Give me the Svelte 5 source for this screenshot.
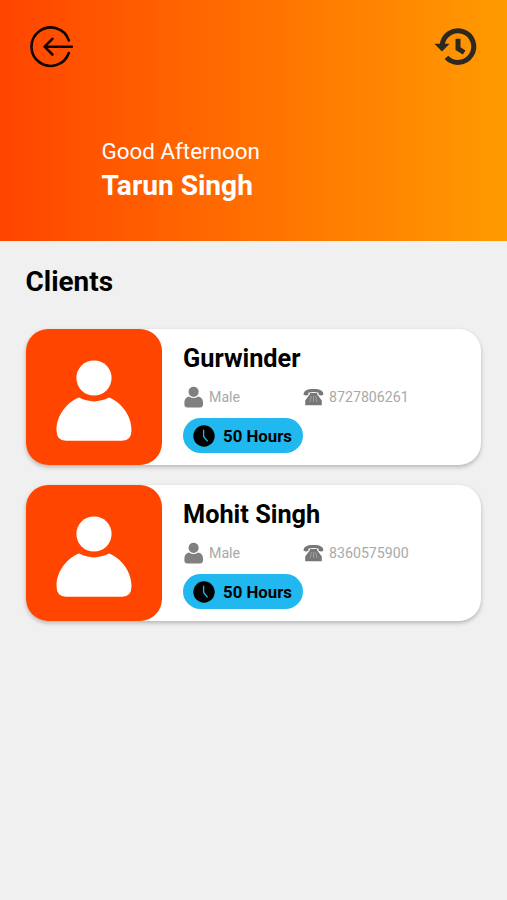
<script lang="ts">
	const user = { greeting: 'Good Afternoon', name: 'Tarun Singh' };

	const clients = [
		{ name: 'Gurwinder', gender: 'Male', phone: '8727806261', hours: 50 },
		{ name: 'Mohit Singh', gender: 'Male', phone: '8360575900', hours: 50 }
	];
</script>

<main>
	<header>
		<nav>
			<button aria-label="Back">
				<svg width="46" height="46" viewBox="0 0 46 46" fill="none" stroke="#100500" stroke-width="2.6" stroke-linecap="round" stroke-linejoin="round">
					<path d="M40.8 17.4 A19.2 19.2 0 1 0 40.8 30" />
					<path d="M43.8 23.7 H16.6 M24.4 15.9 L16.6 23.7 L24.4 31.5" />
				</svg>
			</button>
			<button aria-label="History">
				<svg width="46" height="46" viewBox="0 0 46 46">
					<path d="M9.2 22.4 A15.8 15.8 0 1 1 13.4 34.4" fill="none" stroke="#2b2920" stroke-width="5" />
					<path d="M1.4 20.8 H16.6 L9 28.6 Z" fill="#2b2920" />
					<path d="M25 15.8 V25.6 L31.2 29.5" fill="none" stroke="#2b2920" stroke-width="5" />
				</svg>
			</button>
		</nav>
		<div class="greeting">
			<p>{user.greeting}</p>
			<h1>{user.name}</h1>
		</div>
	</header>

	<section>
		<h2>Clients</h2>
		{#each clients as client}
			<article>
				<div class="avatar">
					<svg width="76" height="82" viewBox="0 0 76 82" fill="#fff">
						<circle cx="38" cy="18" r="17.6" />
						<path d="M23 37.6 Q38 45.2 53 37.6 C66 43 75.5 56 75.5 70 Q75.5 80.8 66 80.8 H10 Q.5 80.8 .5 70 C.5 56 10 43 23 37.6 Z" />
					</svg>
				</div>
				<div class="info">
					<h3>{client.name}</h3>
					<div class="details">
						<span class="gender">
							<svg width="20" height="22" viewBox="0 0 20 22" fill="#808080">
								<circle cx="10.6" cy="5.8" r="5.1" />
								<path d="M6 10.6 Q10.6 13.6 15.2 10.6 Q20 11.6 20 16.6 V18.6 Q20 21.4 17.2 21.4 H4.2 Q1.4 21.4 1.4 18.6 V16.6 Q1.4 11.6 6 10.6 Z" />
							</svg>
							{client.gender}
						</span>
						<span class="phone">
							<svg width="21" height="18" viewBox="0 0 21 18">
								<path d="M.6 6.8 C.4 3 3.6 1 10.5 1 S20.6 3 20.4 6.8 Q18 8 15.6 6.8 V4.8 Q10.5 3.4 5.4 4.8 V6.8 Q3 8 .6 6.8 Z" fill="#777" />
								<path d="M7 6 V5 H14 V6 L18.8 12.6 V17.2 H2.2 V12.6 Z" fill="#777" />
								<path d="M8.4 8 L7 14 M10.5 8 V14 M12.6 8 L14 14" fill="none" stroke="#aaa" stroke-width=".8" />
							</svg>
							{client.phone}
						</span>
					</div>
					<div class="hours">
						<svg width="22" height="22" viewBox="0 0 22 22">
							<circle cx="11" cy="11" r="10.7" />
							<path d="M10.6 4.8 V11.4 L14.6 16.4" fill="none" stroke="#21b8ef" stroke-width="1.3" />
						</svg>
						{client.hours} Hours
					</div>
				</div>
			</article>
		{/each}
	</section>
</main>

<style>
	:global(body) {
		margin: 0;
		background: #f0f0f0;
	}

	main {
		min-height: 900px;
		background: #f0f0f0;
		font-family: Roboto, sans-serif;
		color: #000;
	}

	h1, h2, h3, p {
		margin: 0;
	}

	svg {
		display: block;
		flex: none;
	}

	header {
		box-sizing: border-box;
		height: 241px;
		padding: 23px 28px 0;
		background: linear-gradient(90deg, #ff4500, #ff9b00);
		color: #fff;
	}

	nav {
		display: flex;
		justify-content: space-between;
	}

	button {
		padding: 0;
		border: 0;
		background: none;
	}

	.greeting {
		padding: 66px 0 0 73.5px;
	}

	.greeting p {
		font-size: 22.4px;
		line-height: 33px;
	}

	.greeting h1 {
		font-size: 28.1px;
		line-height: 36px;
	}

	section {
		padding: 24px 26px 0 25.5px;
	}

	h2 {
		margin-bottom: 30px;
		font-size: 27.9px;
		line-height: 34px;
	}

	article {
		display: flex;
		height: 136px;
		margin-bottom: 20px;
		border-radius: 22px;
		background: #fff;
		box-shadow: 0 2px 4px rgba(0, 0, 0, 0.25);
	}

	.avatar {
		display: flex;
		justify-content: center;
		align-items: flex-start;
		box-sizing: border-box;
		width: 136px;
		padding-top: 31px;
		border-radius: 22px;
		background: #ff4500;
	}

	.info {
		flex: 1;
		padding: 13px 0 0 21.5px;
	}

	h3 {
		font-size: 25.3px;
		line-height: 34px;
	}

	.details {
		display: flex;
		margin-top: 9px;
		color: #a9a9a9;
		font-size: 14.2px;
		line-height: 24px;
	}

	.gender, .phone {
		display: flex;
		align-items: center;
	}

	.gender {
		gap: 6px;
		width: 120px;
	}

	.phone {
		gap: 5px;
	}

	.hours {
		display: flex;
		align-items: center;
		gap: 8px;
		box-sizing: border-box;
		width: 120px;
		height: 35px;
		margin-top: 9px;
		padding-left: 10px;
		border-radius: 18px;
		background: #21b8ef;
		font-size: 16.8px;
		font-weight: 700;
		white-space: nowrap;
	}
</style>
